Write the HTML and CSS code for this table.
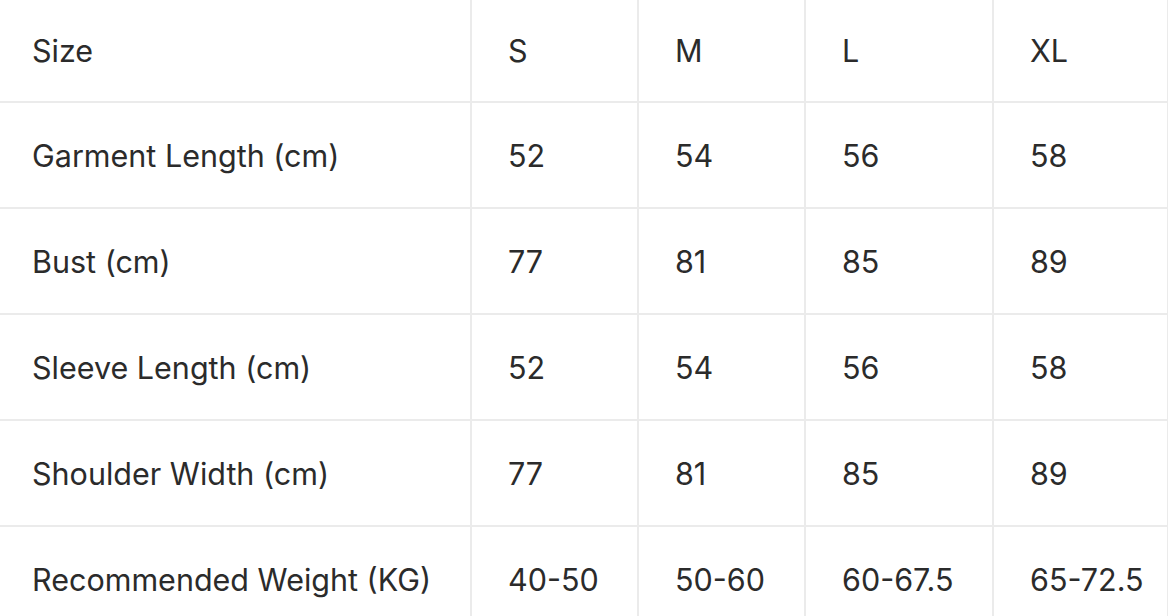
FILE: index.html
```html
<!DOCTYPE html>
<html>
<head>
<meta charset="utf-8">
<link rel="stylesheet" href="styles.css">
</head>
<body>
<table class="size-table">
  <colgroup>
    <col class="c0"><col class="c1"><col class="c2"><col class="c3"><col class="c4">
  </colgroup>
  <tr><td>Size</td><td>S</td><td>M</td><td>L</td><td>XL</td></tr>
  <tr><td>Garment Length (cm)</td><td>52</td><td>54</td><td>56</td><td>58</td></tr>
  <tr><td>Bust (cm)</td><td>77</td><td>81</td><td>85</td><td>89</td></tr>
  <tr><td>Sleeve Length (cm)</td><td>52</td><td>54</td><td>56</td><td>58</td></tr>
  <tr><td>Shoulder Width (cm)</td><td>77</td><td>81</td><td>85</td><td>89</td></tr>
  <tr><td>Recommended Weight (KG)</td><td>40-50</td><td>50-60</td><td>60-67.5</td><td>65-72.5</td></tr>
</table>
</body>
</html>
```
FILE: styles.css
```css
html, body {
  margin: 0;
  padding: 0;
  background: #fff;
}
.size-table {
  border-collapse: collapse;
  table-layout: fixed;
  width: 1168px;
  font-family: Inter, "Noto Sans", sans-serif;
  font-size: 30.5px;
  color: #2b2b2b;
}
.c0 { width: 471px; }
.c1 { width: 167px; }
.c2 { width: 167px; }
.c3 { width: 188px; }
.c4 { width: 175px; }
.size-table td {
  height: 104px;
  padding: 0 0 0 36px;
  border: 2px solid #ebebeb;
  white-space: nowrap;
  vertical-align: middle;
}
.size-table td:first-child {
  border-left: none;
  padding-left: 32px;
}
.size-table tr:first-child td {
  border-top: none;
  height: 101px;
}
```
